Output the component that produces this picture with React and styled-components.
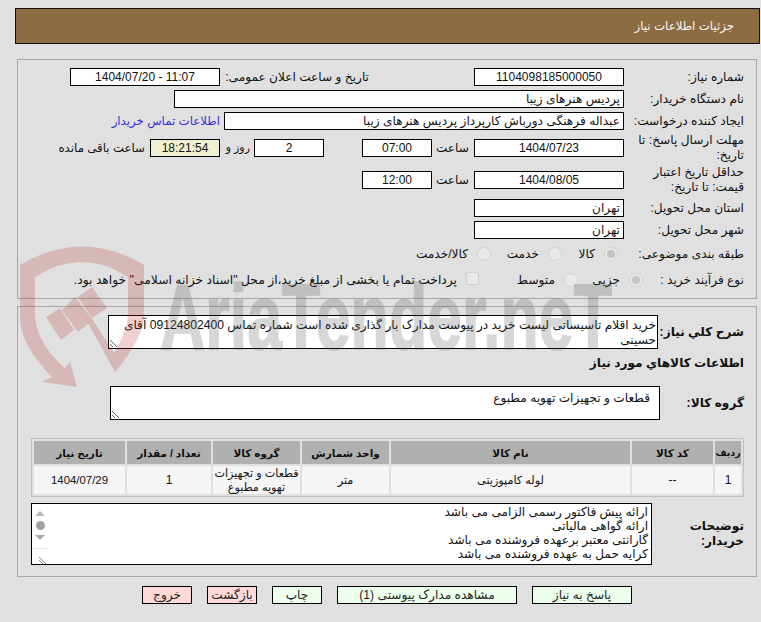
import React from "react";
import styled, { createGlobalStyle } from "styled-components";

const FONT = `"Liberation Sans", "DejaVu Sans", sans-serif`;
const TEXT = "12.15px";

const Global = createGlobalStyle`
  html, body { margin: 0; padding: 0; background: #e0e0e0; }
  body { font-family: ${FONT}; font-size: 12px; color: #111; overflow: hidden; }
  * { box-sizing: border-box; }
`;

const Page = styled.div`
  position: relative;
  width: 761px;
  height: 622px;
  padding: 8px 1px 0 15px;
  direction: rtl;
`;
const Header = styled.div`
  height: 36px;
  background: #8d6c41;
  border: 1px solid #111;
  display: flex;
  align-items: center;
  padding-right: 25px;
  color: #f6f6f6;
  font-size: 11.8px;
`;
const Panel = styled.section`
  margin: ${(p) => p.$top}px 3px 0 2px;
  border: 1px solid #a8a8a8;
  padding: ${(p) => p.$pad};
  display: flex;
  flex-direction: column;
  align-items: stretch;
`;
const Row = styled.div`
  display: flex;
  align-items: center;
  height: ${(p) => p.$h || 18}px;
  margin-top: ${(p) => p.$mt ?? 4}px;
`;
const Label = styled.div`
  width: ${(p) => p.$w || 120}px;
  flex: none;
  padding-right: ${(p) => p.$pr || 0}px;
  line-height: 15px;
  white-space: nowrap;
  font-size: ${TEXT};
  font-weight: ${(p) => (p.$bold ? 700 : 400)};
`;
const Box = styled.div`
  width: ${(p) => p.$w || 150}px;
  height: 18px;
  flex: none;
  margin-right: ${(p) => p.$mr || 0}px;
  background: ${(p) => p.$bg || "#fff"};
  border: 1px solid #000;
  display: flex;
  align-items: center;
  justify-content: ${(p) => (p.$center ? "center" : "flex-start")};
  padding: 0 3px;
  white-space: nowrap;
  overflow: hidden;
  direction: ${(p) => (p.$ltr ? "ltr" : "rtl")};
  font-size: ${(p) => (p.$center ? "12px" : TEXT)};
`;
const Slot = styled.span`
  width: ${(p) => p.$w}px;
  flex: none;
  padding-right: ${(p) => p.$pr || 0}px;
  white-space: nowrap;
  font-size: ${(p) => p.$size || TEXT};
`;
const Inline = styled.span`
  flex: none;
  white-space: nowrap;
  font-size: 11.8px;
  margin-right: ${(p) => p.$mr || 0}px;
`;
const Link = styled(Inline)`
  color: #3a2fd0;
`;
const Option = styled.div`
  width: ${(p) => p.$w}px;
  flex: none;
  display: flex;
  align-items: center;
  gap: 9px;
  white-space: nowrap;
  font-size: ${(p) => p.$size || TEXT};
`;
const Radio = styled.span`
  width: 14px;
  height: 14px;
  flex: none;
  border-radius: 50%;
  border: 1px solid #d2d2d2;
  background: #e9e9e9;
  display: flex;
  align-items: center;
  justify-content: center;
  &::after {
    content: "";
    display: ${(p) => (p.$checked ? "block" : "none")};
    width: 8px;
    height: 8px;
    border-radius: 50%;
    background: #c4c4c4;
  }
`;
const Check = styled.span`
  width: 13px;
  height: 13px;
  flex: none;
  margin-top: -4px;
  border: 1px solid #cfcfcf;
  border-radius: 2px;
  background: #e9e9e9;
`;
const Area = styled.textarea`
  display: block;
  width: ${(p) => p.$w}px;
  height: ${(p) => p.$h}px;
  flex: none;
  margin: 0;
  background: #fff;
  border: 1px solid #000;
  border-radius: 0;
  outline: none;
  padding: ${(p) => p.$pad};
  font-family: ${FONT};
  font-size: ${TEXT};
  line-height: 15px;
  color: #111;
  direction: rtl;
  resize: vertical;
  overflow: hidden;
`;
const Grid = styled.table`
  width: 713px;
  margin-top: 18px;
  border: 1px solid #c2c2c2;
  border-spacing: 2px;
  table-layout: fixed;
  font-size: 11px;
`;
const Th = styled.th`
  height: 23px;
  padding: 0;
  background: #b0b0b0;
  font-weight: 700;
  text-align: center;
  white-space: nowrap;
  font-size: ${(p) => p.$size || 10.5}px;
`;
const Td = styled.td`
  height: 28px;
  padding: 0;
  background: #f5f5f5;
  text-align: center;
  line-height: 14px;
  white-space: nowrap;
  font-size: ${(p) => p.$size || 11.2}px;
`;
const Notes = styled.div`
  width: 621px;
  height: 62px;
  flex: none;
  background: #fff;
  border: 1px solid #000;
  display: flex;
  overflow: hidden;
`;
const NotesText = styled.div`
  flex: 1;
  padding: 1px 3px 0 0;
  font-size: ${TEXT};
  line-height: 14px;
  white-space: pre-line;
`;
const Rail = styled.div`
  width: 16px;
  flex: none;
  display: flex;
  flex-direction: column;
  align-items: center;
  padding-top: 7px;
`;
const Arrow = styled.span`
  width: 0;
  height: 0;
  border-left: 5px solid transparent;
  border-right: 5px solid transparent;
  ${(p) => (p.$down ? "border-top: 5px solid #a6a6a6;" : "border-bottom: 5px solid #b8b8b8;")}
`;
const Thumb = styled.span`
  width: 9px;
  height: 9px;
  margin: 5px 0;
  border-radius: 50%;
  background: #a0a0a0;
`;
const Corner = styled.div`
  width: 16px;
  height: 16px;
  margin-top: auto;
  border-top: 1px solid #e4e4e4;
  display: flex;
  align-items: flex-end;
  justify-content: flex-start;
`;
const Footer = styled.div`
  display: flex;
  justify-content: center;
  gap: 15px;
  margin: 9px 3px 0 2px;
`;
const Btn = styled.button`
  width: ${(p) => p.$w}px;
  height: 18px;
  padding: 0;
  border: 1px solid #000;
  border-radius: 0;
  background: ${(p) => (p.$red ? "#ffd9d9" : "#edffed")};
  font-family: ${FONT};
  font-size: ${TEXT};
  color: #222;
`;
const Mark = styled.svg`
  position: absolute;
  left: 0;
  top: 0;
  pointer-events: none;
`;

const notes = `ارائه پیش فاکتور رسمی الزامی می باشد
ارائه گواهی مالیاتی
گارانتی معتبر برعهده فروشنده می باشد
کرایه حمل به عهده فروشنده می باشد`;

const COLS = [26, 81, 239, 87, 87, 84, 91];

export default function App() {
  return (
    <Page>
      <Global />
      <Header>جزئیات اطلاعات نیاز</Header>

      <Panel $top={15} $pad="8px 12px 9px 0">
        <Row $mt={0}>
          <Label>شماره نیاز:</Label>
          <Box $center>1104098185000050</Box>
          <Label $w={254} $pr={105}>تاریخ و ساعت اعلان عمومی:</Label>
          <Box $center $ltr>1404/07/20 - 11:07</Box>
        </Row>
        <Row>
          <Label>نام دستگاه خریدار:</Label>
          <Box $w={450}>پردیس هنرهای زیبا</Box>
        </Row>
        <Row>
          <Label>ایجاد کننده درخواست:</Label>
          <Box $w={400}>عبداله فرهنگی دورباش کارپرداز پردیس هنرهای زیبا</Box>
          <Link $mr={4}>اطلاعات تماس خریدار</Link>
        </Row>
        <Row $h={27}>
          <Label>مهلت ارسال پاسخ: تا<br />تاریخ:</Label>
          <Box $center>1404/07/23</Box>
          <Slot $w={42} $pr={5}>ساعت</Slot>
          <Box $w={70} $center>07:00</Box>
          <Box $w={70} $center $mr={38}>2</Box>
          <Slot $w={34} $pr={4} $size="11px">روز و</Slot>
          <Box $w={70} $center $bg="#f1efd2">18:21:54</Box>
          <Inline $mr={5}>ساعت باقی مانده</Inline>
        </Row>
        <Row $h={28} $mt={5}>
          <Label>حداقل تاریخ اعتبار<br />قیمت: تا تاریخ:</Label>
          <Box $center>1404/08/05</Box>
          <Slot $w={42} $pr={5}>ساعت</Slot>
          <Box $w={70} $center>12:00</Box>
        </Row>
        <Row $mt={5}>
          <Label>استان محل تحویل:</Label>
          <Box>تهران</Box>
        </Row>
        <Row>
          <Label>شهر محل تحویل:</Label>
          <Box>تهران</Box>
        </Row>
        <Row $mt={6}>
          <Label $w={126}>طبقه بندی موضوعی:</Label>
          <Option $w={56}><Radio $checked />کالا</Option>
          <Option $w={71}><Radio />خدمت</Option>
          <Option $w={100}><Radio />کالا/خدمت</Option>
        </Row>
        <Row $mt={8}>
          <Label $w={101}>نوع فرآیند خرید :</Label>
          <Option $w={65}><Radio $checked />جزیی</Option>
          <Option $w={99}><Radio />متوسط</Option>
          <Option $w={420} $size="12.3px"><Check />پرداخت تمام یا بخشی از مبلغ خرید،از محل "اسناد خزانه اسلامی" خواهد بود.</Option>
        </Row>
      </Panel>

      <Panel $top={7} $pad="8px 12px 11px 0">
        <Row $h={34} $mt={0}>
          <Label $w={86} $bold>شرح کلي نیاز:</Label>
          <Area $w={550} $h={34} $pad="2px 1px 0 0" readOnly value={"خرید اقلام تاسیساتی لیست خرید در پیوست مدارک بار گذاری شده است شماره تماس 09124802400 آقای\nحسینی"} />
        </Row>
        <Row $h={16} $mt={6}>
          <Label $w={300} $bold>اطلاعات کالاهاي مورد نیاز</Label>
        </Row>
        <Row $h={34} $mt={15}>
          <Label $w={84} $bold>گروه کالا:</Label>
          <Area $w={550} $h={34} $pad="4px 9px 0 0" readOnly value="قطعات و تجهیزات تهویه مطبوع" />
        </Row>
        <Grid>
          <colgroup>
            {COLS.map((w, i) => (
              <col key={i} style={{ width: w }} />
            ))}
          </colgroup>
          <thead>
            <tr>
              <Th $size={9.5}>ردیف</Th><Th>کد کالا</Th><Th>نام کالا</Th><Th>واحد شمارش</Th>
              <Th>گروه کالا</Th><Th>تعداد / مقدار</Th><Th>تاریخ نیاز</Th>
            </tr>
          </thead>
          <tbody>
            <tr>
              <Td $size={12}>1</Td><Td $size={12}>--</Td><Td>لوله کامپوزیتی</Td><Td>متر</Td>
              <Td>قطعات و تجهیزات<br />تهویه مطبوع</Td><Td $size={12}>1</Td><Td $size={11.4}>1404/07/29</Td>
            </tr>
          </tbody>
        </Grid>
        <Row $h={62} $mt={6}>
          <Label $w={92} $bold>توضیحات<br />خریدار:</Label>
          <Notes>
            <NotesText>{notes}</NotesText>
            <Rail>
              <Arrow />
              <Thumb />
              <Arrow $down />
              <Corner>
                <svg width="10" height="10" viewBox="0 0 10 10" stroke="#8a8a8a" strokeWidth="1">
                  <path d="M1 3 L8 10 M1 6 L5 10" />
                </svg>
              </Corner>
            </Rail>
          </Notes>
        </Row>
      </Panel>

      <Footer>
        <Btn $w={100}>پاسخ به نیاز</Btn>
        <Btn $w={180}>مشاهده مدارک پیوستی (1)</Btn>
        <Btn $w={50}>چاپ</Btn>
        <Btn $w={50} $red>بازگشت</Btn>
        <Btn $w={50} $red>خروج</Btn>
      </Footer>

      <Mark width="761" height="622" viewBox="0 0 761 622">
        <g fill="rgb(180,40,40)" fillOpacity="0.22">
          <path d="M20 265 Q82 228 144 265 L144 317 Q142 340 115 372 L88 323 L93 320 L114 353 Q128 330 128 312 L128 277 Q82 247 35 277 L35 317 Q38 345 65 368 L70 362 L77 387 L42 382 L52 377 Q20 345 20 317 Z" />
          <path d="M46 317 L60 308 L74 330 L61 340 Z" />
          <path d="M62 310 L75 297 L93 320 L78 332 Z" />
          <path d="M78 297 L92 287 L107 308 L92 318 Z" />
        </g>
        <text
          x="160"
          y="349"
          textLength="452"
          lengthAdjust="spacingAndGlyphs"
          fontFamily="'Liberation Sans', sans-serif"
          fontWeight="700"
          fontSize="92"
          fill="rgb(90,90,90)"
          stroke="rgb(90,90,90)"
          strokeWidth="1.5"
          opacity="0.24"
          direction="ltr"
        >
          AriaTender.neT
        </text>
      </Mark>
    </Page>
  );
}
